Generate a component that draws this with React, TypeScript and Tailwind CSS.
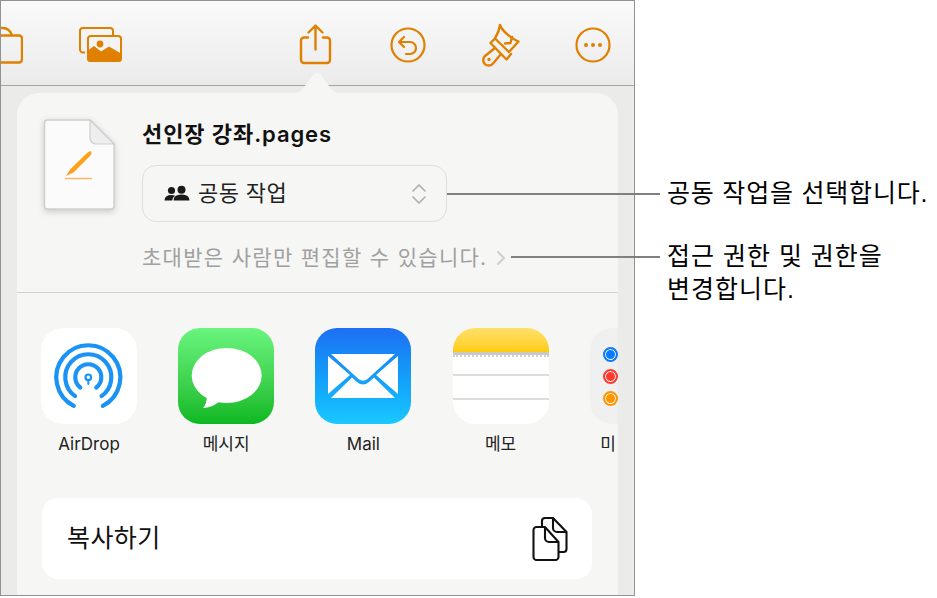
import React from 'react';

const orange = '#e08000';

const FolderIcon = () => (
  <svg width="22" height="44" viewBox="0 0 22 44" fill="none" stroke={orange} strokeWidth="2.4">
    <path d="M-4 39.5 H18 a3 3 0 0 0 3-3 V15.5 a3 3 0 0 0-3-3 H-4" />
    <path d="M-6 5 H2 q6 0 9 7" />
  </svg>
);

const ImagesIcon = () => (
  <svg width="44" height="44" viewBox="0 0 44 44" fill="none">
    <path d="M7 29.5 H5 a3 3 0 0 1-3-3 V8 a3 3 0 0 1 3-3 H32 a3 3 0 0 1 3 3 V12" stroke={orange} strokeWidth="2" />
    <rect x="10" y="13" width="33" height="25" rx="3" stroke={orange} strokeWidth="2" fill="#f3f3f3" />
    <circle cx="22" cy="21" r="3.4" fill={orange} />
    <path d="M10 38 V28 L16 23.5 L23 29 L31 24 L43 31 V38 Z" fill={orange} stroke={orange} strokeLinejoin="round" />
  </svg>
);

const ShareIcon = () => (
  <svg width="44" height="44" viewBox="0 0 44 44" fill="none" stroke={orange} strokeWidth="2.4" strokeLinecap="round" strokeLinejoin="round">
    <path d="M15 14.5 H11 a3 3 0 0 0-3 3 V37 a3 3 0 0 0 3 3 H34 a3 3 0 0 0 3-3 V17.5 a3 3 0 0 0-3-3 H30" />
    <path d="M22.5 26.5 V3 M15.5 9.5 L22.5 2.5 L29.5 9.5" />
  </svg>
);

const UndoIcon = () => (
  <svg width="44" height="44" viewBox="0 0 44 44" fill="none" stroke={orange} strokeWidth="2.2" strokeLinecap="round" strokeLinejoin="round">
    <circle cx="22" cy="22" r="16.5" />
    <path d="M18 14 L13 19 L18 24 M13 19 H24 a6 6 0 0 1 0 12 H20" />
  </svg>
);

const BrushIcon = () => (
  <svg width="44" height="44" viewBox="0 0 44 44" fill="none" stroke={orange} strokeWidth="2.4" strokeLinecap="round" strokeLinejoin="round">
    <path d="M22 2 C24 8 34 16 40.5 18.5 L31 29 L17 15.5 Q21 9 22 2 Z" />
    <path d="M34 14 L32.5 20 L27 20.5" />
    <path d="M17 15.5 L12.5 20 L28.5 36.5 L33 31" />
    <path d="M17 25 L7 33 a5.5 5.5 0 1 0 8 7.5 L23 31" />
    <circle cx="11" cy="36.5" r="1.7" fill={orange} stroke="none" />
  </svg>
);

const MoreIcon = () => (
  <svg width="44" height="44" viewBox="0 0 44 44" fill="none" stroke={orange} strokeWidth="2.2">
    <circle cx="22" cy="22" r="16.5" />
    <circle cx="15" cy="22" r="2" fill={orange} stroke="none" />
    <circle cx="22" cy="22" r="2" fill={orange} stroke="none" />
    <circle cx="29" cy="22" r="2" fill={orange} stroke="none" />
  </svg>
);

const DocIcon = () => (
  <svg width="74" height="96" viewBox="0 0 74 96" fill="none" className="drop-shadow-[0_2px_3px_rgba(0,0,0,0.18)]">
    <path d="M4.5 2 H47 L71 26 V88 a3 3 0 0 1-3 3 H4.5 a3 3 0 0 1-3-3 V5 a3 3 0 0 1 3-3 Z" fill="#fbfbfb" stroke="#cfcfcf" strokeWidth="1.4" />
    <path d="M47 2 V20 a6 6 0 0 0 6 6 H71 Z" fill="#eeeeee" stroke="#cfcfcf" strokeWidth="1.2" strokeLinejoin="round" />
    <path d="M23 58 L27.5 51 L44 35 Q47 32.5 48 33.5 Q49.5 35.5 46.5 38.5 L30.5 54.5 Z" fill="#ff9f1c" />
    <path d="M22 60.5 H49" stroke="#ffb260" strokeWidth="1.4" />
  </svg>
);

const PeopleIcon = () => (
  <svg width="26" height="18" viewBox="0 0 26 18" fill="#1a1a1a">
    <circle cx="7.5" cy="5.5" r="3.6" />
    <circle cx="17.5" cy="4.8" r="4" />
    <path d="M0.5 15.5 q0-5.5 7-5.5 q2.2 0 3.6 .8 q-2.6 1.6-3 4.7 Z" />
    <path d="M9.5 15.5 q0-6 8-6 q8 0 8 6 Z" />
  </svg>
);

const AirDropIcon = () => (
  <div className="w-[96px] h-[96px] rounded-[22px] bg-white">
    <svg width="96" height="96" viewBox="0 0 96 96" fill="none" stroke="#1b93f5" strokeWidth="4.2" strokeLinecap="round">
      <path d="M32.8 77.8 A32 32 0 1 1 61.8 77.8" />
      <path d="M34.1 68.1 A23 23 0 1 1 60.5 68.1" />
      <path d="M39.3 59.5 A13 13 0 1 1 55.3 59.5" />
      <circle cx="47.3" cy="49.3" r="2.8" strokeWidth="2.2" />
      <path d="M47.3 52 V56" strokeWidth="2" />
    </svg>
  </div>
);

const MessagesIcon = () => (
  <div className="w-[96px] h-[96px] rounded-[22px] bg-gradient-to-b from-[#69f57e] to-[#08b81f]">
    <svg width="96" height="96" viewBox="0 0 96 96" fill="#fff">
      <ellipse cx="48.7" cy="47.5" rx="35" ry="27.5" />
      <path d="M29 66 Q29 76 25 80 Q34 80 42 73 Z" />
    </svg>
  </div>
);

const MailIcon = () => (
  <div className="w-[96px] h-[96px] rounded-[22px] bg-gradient-to-b from-[#1e6ff2] to-[#1ac8ff] flex items-center justify-center">
    <svg width="70" height="44" viewBox="0 0 70 44" fill="#fff">
      <path d="M3 0 H67 L39.5 25 q-4.5 3.5-9 0 Z" />
      <path d="M0 2 L22 21 L0 40 Z" />
      <path d="M70 2 L48 21 L70 40 Z" />
      <path d="M3 44 L24 23.5 L29 28 q6 5 12 0 L46 23.5 L67 44 Z" />
    </svg>
  </div>
);

const NotesIcon = () => (
  <div className="w-[96px] h-[96px] rounded-[22px] bg-white overflow-hidden flex flex-col">
    <div className="h-[24px] bg-gradient-to-b from-[#ffe066] to-[#ffcc00]" />
    <div className="h-[3px] bg-[#c9c9c9]" />
    <div className="h-[21px] border-b-2 border-[#dddddd] border-t-0">
      <div className="h-[2px] border-t-2 border-dotted border-[#cfcfcf]" />
    </div>
    <div className="h-[24px] border-b-2 border-[#dddddd]" />
  </div>
);

const RemindersIcon = () => (
  <div className="w-[96px] h-[96px] rounded-[22px] bg-[#f0f0f0] flex flex-col gap-[7px] pl-[13px] pt-[19px] shrink-0">
    <div className="w-[15px] h-[15px] rounded-full bg-[#0a7aff] border-[2.5px] border-[#0a7aff] ring-1 ring-inset ring-white" />
    <div className="w-[15px] h-[15px] rounded-full bg-[#ff3b30] border-[2.5px] border-[#ff3b30] ring-1 ring-inset ring-white" />
    <div className="w-[15px] h-[15px] rounded-full bg-[#ff9500] border-[2.5px] border-[#ff9500] ring-1 ring-inset ring-white" />
  </div>
);

const CopyIcon = () => (
  <svg width="36" height="44" viewBox="0 0 36 44" fill="none" stroke="#111" strokeWidth="2.1" strokeLinejoin="round">
    <path d="M10 10 V4 a3 3 0 0 1 3-3 H21 L34.5 15 V32 a3 3 0 0 1-3 3 H27" />
    <path d="M21 1 V11 a4 4 0 0 0 4 4 H34.5" />
    <path d="M1.5 13 a3 3 0 0 1 3-3 H13 L26.5 25 V40 a3 3 0 0 1-3 3 H4.5 a3 3 0 0 1-3-3 Z" fill="#fff" />
    <path d="M13 10 V21 a4 4 0 0 0 4 4 H26.5" />
  </svg>
);

const apps = [
  { label: 'AirDrop', icon: <AirDropIcon />, labelClass: '' },
  { label: '메시지', icon: <MessagesIcon />, labelClass: '' },
  { label: 'Mail', icon: <MailIcon />, labelClass: '' },
  { label: '메모', icon: <NotesIcon />, labelClass: '' },
  { label: '미리 알림', icon: <RemindersIcon />, labelClass: 'tracking-[1.5px]' },
];

export default function App() {
  return (
    <div className="relative w-[937px] h-[598px] bg-white overflow-hidden font-['Inter','Noto_Sans_CJK_KR',sans-serif]">
      <div className="w-[635px] h-[596px] border border-[#929292] bg-[#ebebea] overflow-hidden flex flex-col">
        {/* toolbar */}
        <div className="h-[85px] shrink-0 border-b border-[#a5a5a5] bg-gradient-to-b from-[#fafafa] to-[#ebebeb] flex pt-[22px]">
          <FolderIcon />
          <div className="ml-[55px]"><ImagesIcon /></div>
          <div className="ml-[171px] flex gap-[48.5px]">
            <ShareIcon />
            <UndoIcon />
            <BrushIcon />
            <MoreIcon />
          </div>
        </div>

        {/* share sheet */}
        <div className="relative mt-[7px] ml-[16px] w-[601px] grow bg-[#f6f6f5] rounded-t-[22px]">
          <svg className="absolute left-[275px] top-[-21px]" width="50" height="22" viewBox="0 0 50 22" fill="#f6f6f5">
            <path d="M0 22 Q6 22 10 18 L21 3 Q25 -1 29 3 L40 18 Q44 22 50 22 Z" />
          </svg>

          <div className="h-[200px] border-b border-[#d2d2d2] flex pl-[26px] pt-[25px]">
            <DocIcon />
            <div className="ml-[25px] flex flex-col">
              <div className="text-[22px] leading-[30px] font-semibold tracking-[0.9px] text-[#111] mt-[1px] whitespace-nowrap">선인장 강좌.pages</div>
              <div className="mt-[16px] w-[305px] h-[57px] rounded-[14px] border border-[#dedede] flex items-center pl-[21px] pr-[19px]">
                <PeopleIcon />
                <span className="ml-[8px] text-[22px] tracking-[0.4px] text-[#222]">공동 작업</span>
                <svg className="ml-auto" width="16" height="24" viewBox="0 0 16 24" fill="none" stroke="#b0b0b0" strokeWidth="1.7" strokeLinecap="round" strokeLinejoin="round">
                  <path d="M2 9 L8 3 L14 9 M2 15 L8 21 L14 15" />
                </svg>
              </div>
              <div className="mt-[19px] flex items-center text-[21px] tracking-[1.3px] leading-[34px] text-[#a0a0a0] whitespace-nowrap">
                초대받은 사람만 편집할 수 있습니다.
                <svg className="ml-[9px]" width="10" height="16" viewBox="0 0 10 16" fill="none" stroke="#cfcfcf" strokeWidth="2.2" strokeLinecap="round" strokeLinejoin="round">
                  <path d="M2 2 L8 8 L2 14" />
                </svg>
              </div>
            </div>
          </div>

          <div className="flex gap-[41.2px] pl-[24px] pt-[35px] overflow-hidden">
            {apps.map((app) => (
              <div key={app.label} className="w-[96px] shrink-0 flex flex-col items-center">
                {app.icon}
                <span className={`mt-[10px] text-[17px] leading-[20px] text-[#222] whitespace-nowrap ${app.labelClass}`}>{app.label}</span>
              </div>
            ))}
          </div>

          <div className="mt-[44px] ml-[25px] w-[550px] h-[81px] rounded-[16px] bg-white flex items-center pl-[25px] pr-[24px]">
            <span className="text-[25px] tracking-[0.4px] text-[#111]">복사하기</span>
            <span className="ml-auto"><CopyIcon /></span>
          </div>
        </div>
      </div>

      {/* callouts */}
      <div className="absolute left-[447px] top-[193px] w-[213px] h-[2px] bg-[#808080]" />
      <div className="absolute left-[511px] top-[256px] w-[149px] h-[2px] bg-[#808080]" />
      <div className="absolute left-[667px] top-[177px] text-[25px] tracking-[0.8px] leading-[32px] text-black whitespace-nowrap font-['Liberation_Sans','Noto_Sans_CJK_KR',sans-serif]">공동 작업을 선택합니다.</div>
      <div className="absolute left-[667px] top-[240px] w-[268px] text-[25px] tracking-[1px] leading-[33px] text-black font-['Liberation_Sans','Noto_Sans_CJK_KR',sans-serif]">접근 권한 및 권한을<br />변경합니다.</div>
    </div>
  );
}
